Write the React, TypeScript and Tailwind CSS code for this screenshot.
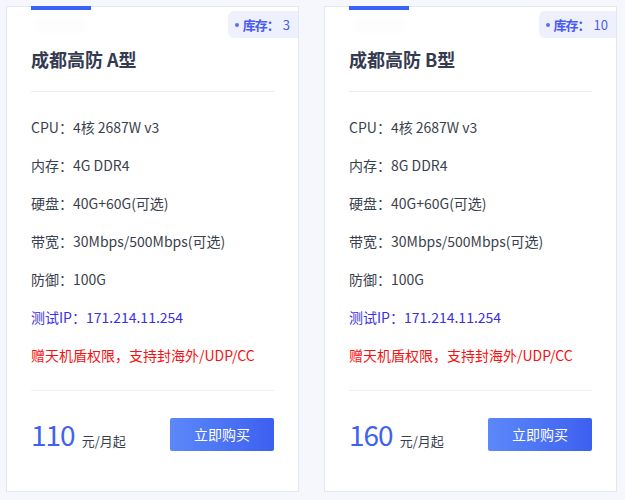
const plans = [
  { name: '成都高防 A型', stock: 3, ram: '4G DDR4', price: 110 },
  { name: '成都高防 B型', stock: 10, ram: '8G DDR4', price: 160 },
];

function PlanCard({ plan }: { plan: (typeof plans)[number] }) {
  const specs = [
    'CPU：4核 2687W v3',
    `内存：${plan.ram}`,
    '硬盘：40G+60G(可选)',
    '带宽：30Mbps/500Mbps(可选)',
    '防御：100G',
  ];
  return (
    <div className="relative flex h-[486px] w-[293px] flex-col border border-[#e3e7f2] bg-white px-6 pt-10">
      <span className="absolute -top-px left-6 h-1 w-[60px] bg-[#3a62f6]" />
      <span className="absolute left-[27px] top-[10px] h-4 w-[54px] rounded-full bg-[#fdfdfe]" />
      <div className="absolute right-0 top-[4px] flex h-[27px] items-center gap-[4px] rounded-l-md bg-[#eef1fd] pl-[7px] pr-[8px] text-[13px] text-[#4a5cf0]">
        <span className="h-[4px] w-[4px] rounded-full bg-[#5a72f0]" />
        <span className="font-bold tracking-[-1px]">库存：</span>
        <span>{plan.stock}</span>
      </div>
      <h2 className="h-6 text-[18px] font-bold leading-6 text-[#343a4f]">{plan.name}</h2>
      <div className="mt-5 h-px bg-[#e9ecf3]" />
      <ul className="pt-4 text-[14px] text-[#3a3f4d]">
        {specs.map((s) => (
          <li key={s} className="h-[38px] leading-[38px]">
            {s}
          </li>
        ))}
        <li className="h-[38px] leading-[38px] text-[#3a2fe6]">测试IP：171.214.11.254</li>
        <li className="h-[38px] leading-[38px] text-[#f51212]">赠天机盾权限，支持封海外/UDP/CC</li>
      </ul>
      <div className="mt-4 h-px bg-[#edf0f8]" />
      <div className="mt-[26px] flex items-end justify-between">
        <div className="flex items-baseline gap-[7px]">
          <span className="text-[28px] leading-[34px] tracking-[-1px] text-[#3f63f0]">{plan.price}</span>
          <span className="text-[13px] text-[#3a3f4d]">元/月起</span>
        </div>
        <button
          type="button"
          className="h-[33px] w-[104px] rounded-[2px] bg-gradient-to-r from-[#5d88f9] to-[#3d5ff0] text-[14px] text-white"
        >
          立即购买
        </button>
      </div>
    </div>
  );
}

export default function App() {
  return (
    <div
      className="flex h-[500px] w-[625px] gap-[25px] bg-[#f5f7fc] pl-[6px] pt-[6px]"
      style={{ fontFamily: '"Noto Sans CJK SC", "Noto Sans", sans-serif' }}
    >
      {plans.map((p) => (
        <PlanCard key={p.name} plan={p} />
      ))}
    </div>
  );
}
